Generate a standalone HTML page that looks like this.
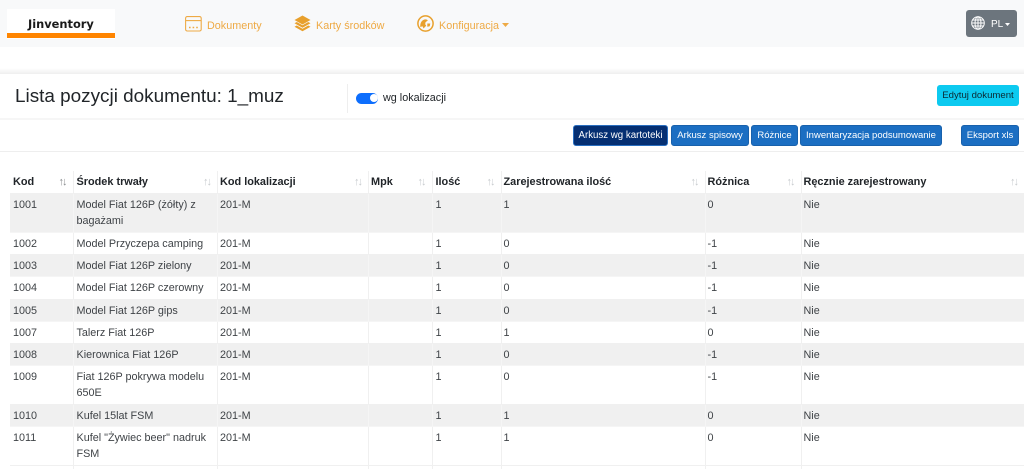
<!DOCTYPE html>
<html lang="pl">
<head>
<meta charset="utf-8">
<title>Lista pozycji dokumentu</title>
<style>
*{box-sizing:border-box}
html,body{margin:0;padding:0;width:1024px;height:469px;overflow:hidden;background:#fff;font-family:"Liberation Sans",sans-serif;color:#212529}
#wrap{position:relative;width:1024px;height:469px;overflow:hidden}
.a{position:absolute;white-space:nowrap}
#nav{left:0;top:0;width:1024px;height:47px;background:#f8f9fa}
#logo{left:7px;top:9px;width:108px;height:30px;background:#fff}
#bar{left:7px;top:33px;width:108px;height:5px;background:#ff8500}
#logot{left:28px;top:16px;font:bold 11.4px/16px "DejaVu Sans",sans-serif;color:#1a1a1a;letter-spacing:0}
.nl{font-size:10.8px;line-height:16px;color:#eeaa45;top:18px}
.btn{height:21px;top:125px;background:#1b6ec2;border:1px solid #1861ac;border-radius:3px;color:#fff;font-size:9.5px;line-height:20px;text-align:center}
#grad{left:0;top:68px;width:1024px;height:6px;background:linear-gradient(#fff,#efefef)}
#h1{left:15px;top:85px;font-size:18.9px;line-height:24px;color:#212529}
table{position:absolute;left:10px;top:171px;width:1014px;border-collapse:collapse;table-layout:fixed;font-size:10.8px;line-height:16.8px;color:#3f4347}
td,th{border:1px solid #f0f0f0;border-top:0;padding:0 2px;vertical-align:top;text-align:left;overflow:hidden}
tr>*:first-child{border-left:0;padding-left:3px}
tr>*:last-child{border-right:0}
tr>*:nth-child(2),tr>*:nth-child(5){padding-left:3px}
th{font-size:10.9px;font-weight:bold;color:#212529;height:22px;line-height:21px;position:relative;padding-top:1px;background:#fff;white-space:nowrap}
th:after{content:"↑↓";position:absolute;right:0;top:3px;width:14px;font-size:11px;line-height:16px;letter-spacing:-2px;color:#c8cbce;font-weight:normal}
th:first-child:after{color:#8a8d90}
td{padding-top:2.500px;white-space:normal}
tr.o td{background:#f0f0f0;border-color:#f5f5f5}
</style>
</head>
<body>
<div id="wrap">
<div class="a" id="nav"></div>
<div class="a" id="logo"></div>
<div class="a" id="bar"></div>
<div class="a" id="logot">Jinventory</div>

<svg class="a" style="left:185px;top:16px" width="17" height="16" viewBox="0 0 17 16" fill="none" stroke="#eeaa45" stroke-width="1.1"><rect x=".6" y=".6" width="15.6" height="14.400" rx="1.6"/><path d="M1 4.600h15"/><path d="M4 11.500h1.600M7.600 11.500h1.600M11.200 11.500h1.600" stroke-width="1.500"/></svg>
<div class="a nl" style="left:207px">Dokumenty</div>

<svg class="a" style="left:294px;top:15px" width="17" height="17" viewBox="0 0 17 17" fill="#e8a02c"><path d="M8.500 .5 16.500 5 8.500 9.500 .5 5z"/><path d="M.5 8.300 2.800 7l5.700 3.200L14.200 7l2.300 1.300-8 4.400z"/><path d="M.5 11.800 2.800 10.500l5.700 3.200 5.700-3.200 2.300 1.300-8 4.400z"/></svg>
<div class="a nl" style="left:316px">Karty środków</div>

<svg class="a" style="left:417px;top:15px" width="17" height="17" viewBox="0 0 17 17"><circle cx="8.500" cy="8.500" r="7.600" fill="none" stroke="#e8a02c" stroke-width="1.500"/><path d="M3.300 12c-.4-3.500 1.200-6.800 4.200-7.500 1.600-.3 2.800.1 3.300 1l-2.300 1.700-.3 2.100 1 1.400-2.700 2.800-1-2.300z" fill="#e8a02c"/><path d="M10.300 8.500h3l-.6 2.800-2.400.5z" fill="#e8a02c"/></svg>
<div class="a nl" style="left:439px">Konfiguracja</div>
<svg class="a" style="left:502px;top:23px" width="7" height="4"><path d="M0 0h7L3.500 4z" fill="#eeaa45"/></svg>

<div class="a" style="left:966px;top:10px;width:51px;height:27px;background:#6c757d;border-radius:3px"></div>
<svg class="a" style="left:971px;top:16px" width="14" height="14" viewBox="0 0 14 14" fill="none" stroke="#fff" stroke-width="1"><circle cx="7" cy="7" r="6.300"/><ellipse cx="7" cy="7" rx="3" ry="6.300"/><path d="M7 .7v12.600M.7 7h12.600M1.500 4h11M1.500 10h11"/></svg>
<div class="a" style="left:991px;top:18px;font-size:10px;line-height:14px;color:#fff">PL</div>
<svg class="a" style="left:1005px;top:23px" width="5" height="3"><path d="M0 0h5L2.500 3z" fill="#fff"/></svg>

<div class="a" id="grad"></div>
<div class="a" style="left:0;top:74px;width:2px;height:45px;background:#fff"></div>
<div class="a" id="h1">Lista pozycji dokumentu: 1_muz</div>
<div class="a" style="left:347px;top:84px;width:1px;height:29px;background:#eee"></div>
<div class="a" style="left:356px;top:93px;width:22px;height:10.500px;background:#0d6efd;border-radius:6px"></div>
<div class="a" style="left:369.500px;top:94.300px;width:8px;height:8px;background:#fff;border-radius:50%"></div>
<div class="a" style="left:383px;top:90px;font-size:10.800px;line-height:16px;color:#212529">wg lokalizacji</div>
<div class="a" style="left:937px;top:85px;width:82px;height:21px;background:#0dcaf0;border-radius:3px;color:#0b2a33;font-size:9.600px;line-height:22px;text-align:center">Edytuj dokument</div>
<div class="a" style="left:0;top:118px;width:1024px;height:2px;background:#f6f6f6"></div>

<div class="a btn" style="left:573px;width:95px;background:#052f72;border-color:#2a6fc0;font-size:9.700px">Arkusz wg kartoteki</div>
<div class="a btn" style="left:671px;width:78px">Arkusz spisowy</div>
<div class="a btn" style="left:751px;width:47px">Różnice</div>
<div class="a btn" style="left:800px;width:142px">Inwentaryzacja podsumowanie</div>
<div class="a btn" style="left:961px;width:58px">Eksport xls</div>
<div class="a" style="left:0;top:151px;width:1024px;height:1px;background:#eee"></div>

<table>
<colgroup><col style="width:63px"><col style="width:144.500px"><col style="width:151px"><col style="width:63.500px"><col style="width:69px"><col style="width:204px"><col style="width:96px"><col></colgroup>
<thead><tr><th>Kod</th><th>Środek trwały</th><th>Kod lokalizacji</th><th>Mpk</th><th>Ilość</th><th>Zarejestrowana ilość</th><th>Różnica</th><th>Ręcznie zarejestrowany</th></tr></thead>
<tbody>
<tr class="o" style="height:39px"><td>1001</td><td>Model Fiat 126P (żółty) z bagażami</td><td>201-M</td><td></td><td>1</td><td>1</td><td>0</td><td>Nie</td></tr>
<tr style="height:22px"><td>1002</td><td>Model Przyczepa camping</td><td>201-M</td><td></td><td>1</td><td>0</td><td>-1</td><td>Nie</td></tr>
<tr class="o" style="height:22px"><td>1003</td><td>Model Fiat 126P zielony</td><td>201-M</td><td></td><td>1</td><td>0</td><td>-1</td><td>Nie</td></tr>
<tr style="height:23px"><td>1004</td><td>Model Fiat 126P czerowny</td><td>201-M</td><td></td><td>1</td><td>0</td><td>-1</td><td>Nie</td></tr>
<tr class="o" style="height:22px"><td>1005</td><td>Model Fiat 126P gips</td><td>201-M</td><td></td><td>1</td><td>0</td><td>-1</td><td>Nie</td></tr>
<tr style="height:22px"><td>1007</td><td>Talerz Fiat 126P</td><td>201-M</td><td></td><td>1</td><td>1</td><td>0</td><td>Nie</td></tr>
<tr class="o" style="height:22px"><td>1008</td><td>Kierownica Fiat 126P</td><td>201-M</td><td></td><td>1</td><td>0</td><td>-1</td><td>Nie</td></tr>
<tr style="height:39px"><td>1009</td><td>Fiat 126P pokrywa modelu 650E</td><td>201-M</td><td></td><td>1</td><td>0</td><td>-1</td><td>Nie</td></tr>
<tr class="o" style="height:22px"><td>1010</td><td>Kufel 15lat FSM</td><td>201-M</td><td></td><td>1</td><td>1</td><td>0</td><td>Nie</td></tr>
<tr style="height:39px"><td>1011</td><td>Kufel "Żywiec beer" nadruk FSM</td><td>201-M</td><td></td><td>1</td><td>1</td><td>0</td><td>Nie</td></tr>
<tr style="height:22px"><td></td><td></td><td></td><td></td><td></td><td></td><td></td><td></td></tr>
</tbody>
</table>
</div>
</body>
</html>
